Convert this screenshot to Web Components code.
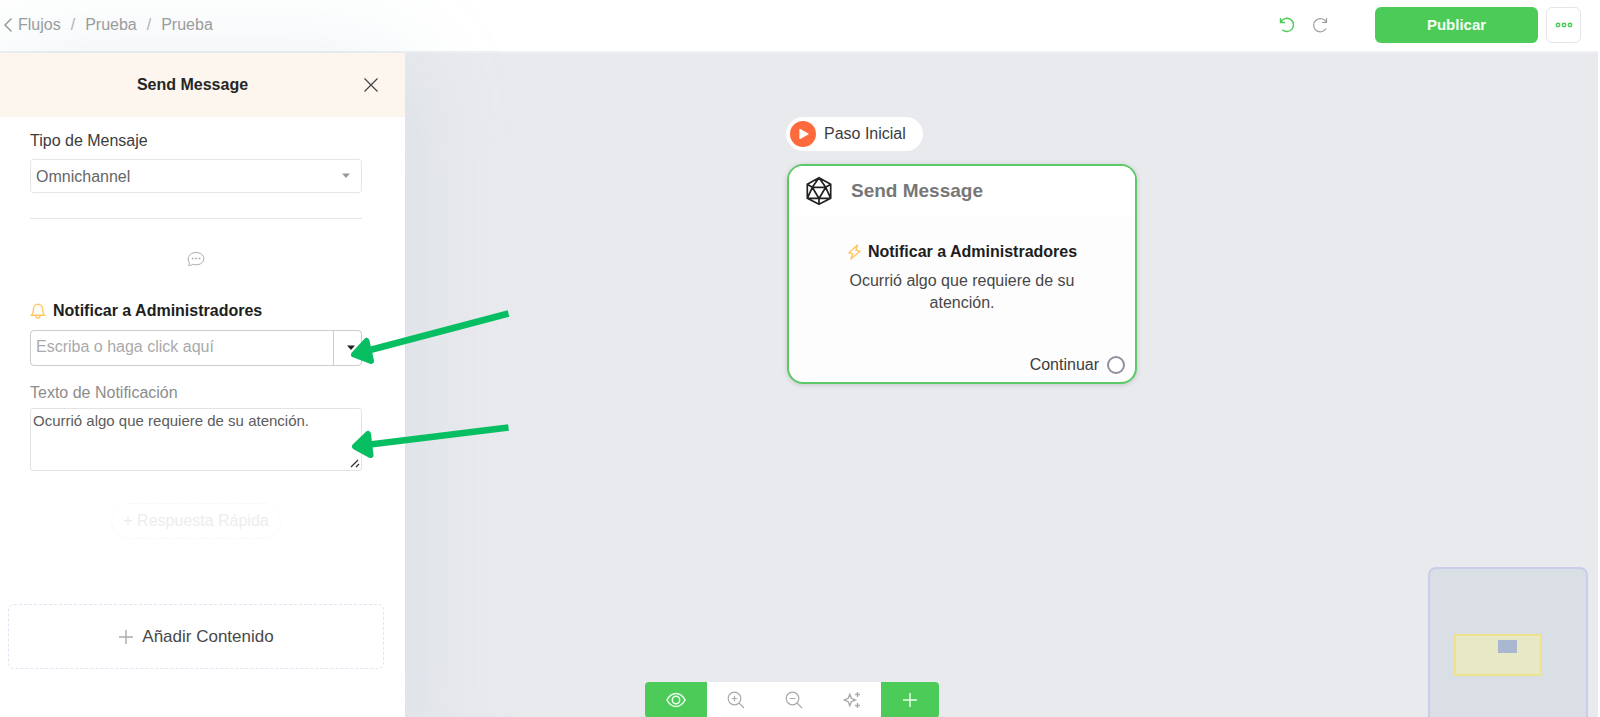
<!DOCTYPE html>
<html lang="es">
<head>
<meta charset="utf-8">
<meta name="viewport" content="width=device-width, initial-scale=1">
<title>Flujos / Prueba</title>
<style>
html, body { margin: 0; height: 100%; background: #fff; }
body { font: 16px/20px "Liberation Sans", Arial, sans-serif; color: #3c3c3c; overflow: hidden; }
</style>
</head>
<body>
<flow-app></flow-app>
<script>
const define = (name, html, init) => {
  const template = document.createElement('template');
  template.innerHTML = html;
  customElements.define(name, class extends HTMLElement {
    constructor() {
      super();
      this.attachShadow({ mode: 'open' }).append(template.content.cloneNode(true));
    }
    connectedCallback() { if (init) init(this, this.shadowRoot); }
  });
};

const ICONS = {
  back: ['0 0 10 16', '<path d="M8.500 1.500 2 8l6.500 6.500" stroke-width="1.500"/>'],
  undo: ['0 0 16 16', '<path d="M1.500 1v4.500h4.500M1.800 5.300A6.600 6.600 0 1 1 3.300 12.700" stroke-width="1.400"/>'],
  redo: ['0 0 16 16', '<path d="M14.500 1v4.500h-4.500M14.200 5.300A6.600 6.600 0 1 0 14 11.500"/>'],
  more: ['0 0 18 6', '<g stroke-width="1.500"><circle cx="3" cy="3" r="1.700"/><circle cx="9" cy="3" r="1.700"/><circle cx="15" cy="3" r="1.700"/></g>'],
  close: ['0 0 16 16', '<path d="M1.500 1.500l13 13M14.500 1.500l-13 13"/>'],
  chat: ['0 0 18 16', '<path d="M1.500 14.500c.8-.9 1-1.900.6-3A5.800 5.800 0 0 1 1.200 8C1.200 4.200 4.500 1.500 9 1.500S16.800 4 16.800 7.600 13.500 13.800 9 13.800c-1.200 0-2.300-.2-3.300-.5-1.300.9-2.800 1.300-4.200 1.200z"/><path d="M4.800 7.500h1.700M8.200 7.500h1.700M11.600 7.500h1.700" stroke-width="1.700"/>'],
  bell: ['0 0 16 18', '<path d="M1.500 13.300c1.400-1.300 1.900-2.600 1.900-6.100C3.400 4.400 5.300 2.200 8 2.200S12.600 4.400 12.600 7.200c0 3.500.5 4.800 1.900 6.100zM6 14a2 2 0 0 0 4 0" stroke-width="1.400"/>'],
  bolt: ['0 0 15 18', '<path d="M10.500 2 2 9.700l3.800 1-2 5.300L13 8.300l-4-1z" stroke-width="1.400" stroke-linejoin="round"/>'],
  plus: ['0 0 16 16', '<path d="M8 1v14M1 8h14" stroke-width="1.400"/>'],
  eye: ['0 0 20 16', '<path d="M1 8c2-4 5-6.500 9-6.500S17 4 19 8c-2 4-5 6.500-9 6.500S3 12 1 8z" stroke-width="1.500"/><circle cx="10" cy="8" r="3.700" stroke-width="1.500"/>'],
  zoomin: ['0 0 18 18', '<circle cx="7.500" cy="7.500" r="6.300"/><path d="M12 12l5 5M7.500 4.700v5.600M4.700 7.500h5.600"/>'],
  zoomout: ['0 0 18 18', '<circle cx="7.500" cy="7.500" r="6.300"/><path d="M12 12l5 5M4.700 7.500h5.600"/>'],
  sparkle: ['0 0 18 18', '<path d="M6.800 3.300 8.400 7.300 12.400 9 8.400 10.700 6.800 14.700 5.200 10.700 1 9 5.200 7.300zM14.500 1v5M12 3.500h5M14.500 12v5M12 14.500h5" stroke-width="1.400"/>'],
  dice: ['0 0 28 30', '<path d="M14 1.700 25.700 8.300v14L14 28.300 2.300 22.300v-14zM7.300 11.300h13.400L14 22.500zM7.300 11.300 14 1.700l6.700 9.600 5-3M7.300 11.300l-5-3M7.300 11.300l-5 11h23.400l-5-11M14 22.300v6" stroke-linejoin="round"/>'],
  play: ['0 0 26 26', '<circle cx="13" cy="13" r="13" fill="#ff6a3d" stroke="none"/><path d="M10 8.500v9l8-4.500z" fill="#fff" stroke="#fff" stroke-linejoin="round"/>'],
  caret: ['0 0 10 6', '<path d="M1 .5h8L5 5z" fill="currentColor" stroke="none"/>']
};

define('ui-icon', `
<style>
:host { display: inline-flex; flex: none; }
svg { display: block; fill: none; stroke: currentColor; stroke-width: var(--stroke, 1.2); }
</style>`, (el, root) => {
  const [box, shape] = ICONS[el.getAttribute('name')];
  const [, , w, h] = box.split(' ');
  root.querySelector('svg')?.remove();
  root.querySelector('style').insertAdjacentHTML('afterend',
    `<svg viewBox="${box}" width="${w}" height="${h}" aria-hidden="true">${shape}</svg>`);
});

define('top-bar', `
<style>
:host { display: flex; align-items: center; height: 51px; margin-right: 2px; padding: 0 17px 1px 3px; box-sizing: border-box;
  background: #fff; box-shadow: 0 2px 0 #eef0f3; color: #9b9b9b; }
nav { display: flex; align-items: center; gap: 10px; flex: 1; }
a { color: inherit; text-decoration: none; display: flex; align-items: center; gap: 5px; }
.sep { color: #b4b4b4; }
.actions { display: flex; align-items: center; }
button { font: inherit; cursor: pointer; border: 0; background: none; padding: 0; color: inherit; display: flex; align-items: center; justify-content: center; }
.history { gap: 17px; margin-right: 47px; display: flex; }
.undo { color: #4ccb58; }
.publish { width: 163px; height: 36px; border-radius: 6px; background: #4ccb58; color: #f4fff4; font-size: 15px; font-weight: bold; margin-right: 8px; }
.more { width: 35px; height: 36px; box-sizing: border-box; border: 1px solid #e5e5e8; border-radius: 6px; color: #4ccb58; }
</style>
<nav aria-label="Ruta">
  <a href="#flujos"><ui-icon name="back"></ui-icon>Flujos</a><span class="sep">/</span>
  <a href="#carpeta">Prueba</a><span class="sep">/</span>
  <a href="#flujo">Prueba</a>
</nav>
<div class="actions">
  <div class="history">
    <button class="undo" type="button" aria-label="Deshacer"><ui-icon name="undo"></ui-icon></button>
    <button type="button" aria-label="Rehacer"><ui-icon name="redo"></ui-icon></button>
  </div>
  <button class="publish" type="button">Publicar</button>
  <button class="more" type="button" aria-label="Más opciones"><ui-icon name="more"></ui-icon></button>
</div>`);

define('side-panel', `
<style>
:host { display: flex; flex-direction: column; width: 405px; flex: none; background: #fff; position: relative; z-index: 1;
  margin-bottom: -60px; box-shadow: 0 8px 100px rgba(150, 180, 195, .22); }
header { display: flex; align-items: center; height: 64px; background: #fcf6ef; padding: 0 26px 0 22px; }
h2 { flex: 1; margin: 0; text-align: center; font-size: 16px; line-height: 20px; color: #262626; }
button { font: inherit; border: 0; background: none; padding: 0; cursor: pointer; color: #444; }
.close { display: flex; }
.body { padding: 14px 21px 0 8px; display: flex; flex-direction: column; }
</style>
<header><h2>Send Message</h2><button class="close" type="button" aria-label="Cerrar"><ui-icon name="close"></ui-icon></button></header>
<div class="body"><slot></slot></div>`);

define('message-form', `
<style>
:host { display: flex; flex-direction: column; padding: 0 22px; }
label { display: block; }
.select { display: grid; align-items: center; margin-top: 8px; }
.select > * { grid-area: 1 / 1; }
.select ui-icon { justify-self: end; margin-right: 11px; color: #999; pointer-events: none; }
select { appearance: none; width: 100%; height: 34px; border: 1px solid #e6e6e6; border-radius: 3px; background: #fff; font: inherit; color: #666; padding: 2px 5px 0; }
hr { width: 100%; margin: 25px 0 32px; border: 0; border-top: 1px solid #e6e6e6; }
.chat { align-self: center; color: #aaa; height: 18px; --stroke: 1; }
.title { display: flex; align-items: center; gap: 7px; margin: 32px 0 9px; font-size: 16px; line-height: 20px; color: #1e1e1e; }
.title ui-icon { color: #ffc766; }
.combo { display: flex; height: 36px; box-sizing: border-box; border: 1px solid #ccc; border-radius: 4px; }
.combo input { flex: 1; min-width: 0; border: 0; background: none; padding: 0 5px 2px; font: inherit; color: #555; }
.combo input::placeholder { color: #aaa; opacity: 1; }
.combo button { width: 28px; border: 0; border-left: 1px solid #ccc; background: none; padding: 0 0 0 6px; color: #222; display: flex; align-items: center; justify-content: center; }
.muted { color: #8c8c8c; margin: 17px 0 5px; }
textarea { display: block; width: 100%; height: 63px; box-sizing: border-box; border: 1px solid #e3e3e3; border-radius: 3px; padding: 2px; font: 15px/20px "Liberation Sans", Arial, sans-serif; color: #5c5c5c; resize: vertical; }
textarea::-webkit-resizer { background: url("data:image/svg+xml,%3Csvg xmlns='http://www.w3.org/2000/svg' width='15' height='15'%3E%3Cpath d='M5 12l7-7M10 12l3-3' stroke='%23333' stroke-width='1.300'/%3E%3C/svg%3E") no-repeat; }
.quick { align-self: center; width: 170px; height: 36px; margin-top: 32px; border: 1px dashed #f7f7f7; border-radius: 18px; background: none; font: inherit; color: #ededed; padding: 0; white-space: nowrap; }
</style>
<label for="type">Tipo de Mensaje</label>
<div class="select"><select id="type"><option>Omnichannel</option></select><ui-icon name="caret"></ui-icon></div>
<hr>
<ui-icon class="chat" name="chat"></ui-icon>
<h3 class="title"><ui-icon name="bell"></ui-icon><label for="admins">Notificar a Administradores</label></h3>
<div class="combo"><input id="admins" type="text" placeholder="Escriba o haga click aquí"><button type="button" aria-label="Ver lista"><ui-icon name="caret"></ui-icon></button></div>
<label class="muted" for="text">Texto de Notificación</label>
<textarea id="text">Ocurrió algo que requiere de su atención.</textarea>
<button class="quick" type="button">+ Respuesta Rápida</button>`);

define('add-content', `
<style>
:host { display: block; margin-top: 65px; }
button { display: flex; width: 100%; height: 65px; align-items: center; justify-content: center; gap: 8px; border: 1px dashed #dbe8f3; border-radius: 6px; background: none; font: 17px/20px "Liberation Sans", Arial, sans-serif; color: #484848; padding: 0; cursor: pointer; }
ui-icon { color: #aaa; }
</style>
<button type="button"><ui-icon name="plus"></ui-icon><slot></slot></button>`);

define('start-badge', `
<style>
:host { display: inline-flex; align-items: center; gap: 8px; height: 34px; box-sizing: border-box; padding: 0 17px 0 4px; border-radius: 17px; background: #fff; white-space: nowrap; }
</style>
<ui-icon name="play"></ui-icon><span><slot></slot></span>`);

define('flow-node', `
<style>
:host { display: flex; flex-direction: column; width: 350px; height: 220px; box-sizing: border-box; border: 2px solid #5cc968; border-radius: 16px; background: #fdfdfd; box-shadow: 0 1px 5px rgba(0, 0, 0, .16); overflow: hidden; }
header { display: flex; align-items: center; gap: 18px; height: 50px; padding: 0 16px; background: #fff; }
header ui-icon { color: #222; --stroke: 1.7; }
h2 { margin: 0; font-size: 19px; line-height: 24px; color: #777; }
.content { flex: 1; padding: 26px 50px 0; text-align: center; }
h3 { display: flex; justify-content: center; align-items: center; gap: 6px; margin: 0 0 8px; font-size: 16px; line-height: 20px; color: #1e1e1e; white-space: nowrap; }
h3 ui-icon { color: #ffc766; }
p { margin: 0; line-height: 22px; color: #484848; }
footer { display: flex; justify-content: flex-end; align-items: center; gap: 8px; padding: 0 10px 7px; }
.port { width: 18px; height: 18px; box-sizing: border-box; border: 2px solid #8e929e; border-radius: 50%; background: #fff; }
</style>
<header><ui-icon name="dice"></ui-icon><h2><slot name="title"></slot></h2></header>
<div class="content"><h3><ui-icon name="bolt"></ui-icon><slot name="action"></slot></h3><p><slot></slot></p></div>
<footer><span>Continuar</span><span class="port"></span></footer>`);

define('canvas-tools', `
<style>
:host { display: flex; height: 36px; border-radius: 4px; overflow: hidden; background: #fff; }
button { display: flex; align-items: center; justify-content: center; width: 58px; border: 0; padding: 0; background: #fff; color: #aaa; cursor: pointer; }
.on { background: #4ccb58; color: #eaffea; }
.view { width: 62px; }
</style>
<button class="on view" type="button" aria-label="Vista"><ui-icon name="eye"></ui-icon></button>
<button type="button" aria-label="Acercar"><ui-icon name="zoomin"></ui-icon></button>
<button type="button" aria-label="Alejar"><ui-icon name="zoomout"></ui-icon></button>
<button type="button" aria-label="Ordenar"><ui-icon name="sparkle"></ui-icon></button>
<button class="on" type="button" aria-label="Añadir"><ui-icon name="plus"></ui-icon></button>`);

define('mini-map', `
<style>
:host { display: block; width: 160px; height: 160px; box-sizing: border-box; border: 2px solid #cacdea; border-radius: 8px; background: #dadfe6; }
svg { display: block; }
</style>
<svg width="156" height="156" aria-hidden="true"><rect x="25" y="66" width="86" height="40" fill="#e6e8c6" stroke="#eee38c" stroke-width="2"/><rect x="68" y="71" width="19" height="13" fill="#aab7d1"/></svg>`);

define('flow-canvas', `
<style>
:host { display: block; flex: 1; min-width: 0; position: relative; overflow: hidden; margin-right: 2px; background: #e9eaee; }
start-badge { position: absolute; left: 381px; top: 64px; }
flow-node { position: absolute; left: 382px; top: 111px; }
canvas-tools { position: absolute; left: 240px; bottom: -1px; }
mini-map { position: absolute; right: 10px; bottom: -10px; }
</style>
<start-badge>Paso Inicial</start-badge>
<flow-node><span slot="title">Send Message</span><span slot="action">Notificar a Administradores</span>Ocurrió algo que requiere de su atención.</flow-node>
<canvas-tools></canvas-tools>
<mini-map></mini-map>`);

define('guide-arrows', `
<style>
:host { display: block; pointer-events: none; }
svg { display: block; }
</style>
<svg width="160" height="154" viewBox="0 0 160 154" fill="#07bf62" stroke="#07bf62" aria-hidden="true">
  <path d="M20 40 158.500 3.500" stroke-width="6.500"/>
  <path d="M4 44.500 16.500 31 21 51z" stroke-width="6" stroke-linejoin="round"/>
  <path d="M20 134.500 158.500 117.500" stroke-width="6.500"/>
  <path d="M5 136.500 18 124 20.500 145z" stroke-width="6" stroke-linejoin="round"/>
</svg>`);

define('flow-app', `
<style>
:host { display: flex; flex-direction: column; height: 100vh; overflow: hidden; position: relative; }
main { display: flex; flex: 1; min-height: 0; margin-top: 2px; }
guide-arrows { position: absolute; left: 350px; top: 310px; z-index: 2; }
</style>
<top-bar></top-bar>
<main>
  <side-panel><message-form></message-form><add-content>Añadir Contenido</add-content></side-panel>
  <flow-canvas></flow-canvas>
</main>
<guide-arrows></guide-arrows>`);
</script>
</body>
</html>
